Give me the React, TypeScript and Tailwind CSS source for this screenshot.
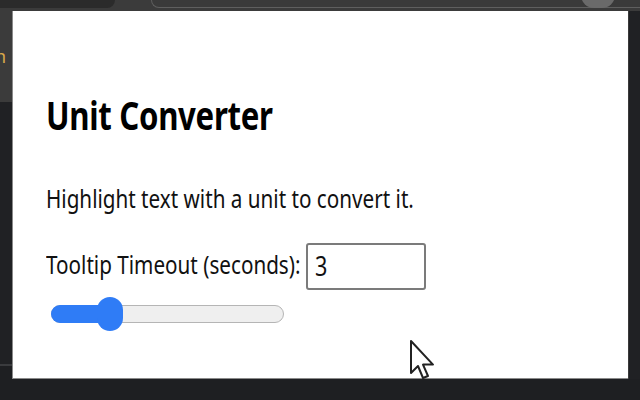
import React from "react";

export default function App() {
  return (
    <div className="relative w-[640px] h-[400px] overflow-hidden bg-[#202124]" style={{ fontFamily: '"Noto Sans", "Open Sans", sans-serif' }}>
      {/* top chrome strip */}
      <div className="flex h-[11px] bg-[#3b3b3b]">
        <div className="w-[115px] h-[8px] bg-[#2b2b2b] rounded-br-[8px]" />
        <div className="ml-[36px] flex-1 h-[8px] rounded-bl-[8px] border-l border-b border-[#5f5f5f] bg-[#3a3a3a]" />
        <div className="absolute left-[581px] top-[-18px] w-[34px] h-[26px] rounded-full bg-[#6a6a6a]" />
      </div>
      <div className="flex h-[368px]">
        {/* left side */}
        <div className="w-[12px] flex flex-col">
          <div className="h-[91px] bg-[#3b3b3b] relative">
            <span className="absolute left-[-5px] top-[36px] text-[18px] leading-none text-[#d9a84a]">n</span>
          </div>
          <div className="h-[262px] bg-[#202124]" />
          <div className="h-[2px] bg-[#3a3b3e]" />
          <div className="flex-1 bg-[#1e1f22]" />
        </div>
        {/* popup */}
        <div className="w-[616px] bg-white border-l border-b border-[#8a8a8a] pl-[33px] pt-[80px]">
          <h1 className="h-[48px] text-[39px] font-bold leading-[48px] text-black tracking-[-0.4px] whitespace-nowrap">
            <span className="inline-block origin-left scale-x-[0.8]">Unit Converter</span>
          </h1>
          <p className="mt-[43px] h-[32px] text-[26px] leading-[32px] text-[#111] whitespace-nowrap">
            <span className="inline-block origin-left scale-x-[0.795]">Highlight text with a unit to convert it.</span>
          </p>
          <div className="mt-[29px] flex items-start">
            <div className="w-[260px] mt-[5px] h-[32px] text-[26px] leading-[32px] text-[#111] whitespace-nowrap">
              <span className="inline-block origin-left scale-x-[0.795]">Tooltip Timeout (seconds):</span>
            </div>
            <div className="w-[120px] h-[47px] border-2 border-[#7b7b7b] rounded-[3px] pl-[7px] pt-[3px] text-[27px] leading-[36px] text-[#111]">
              <span className="inline-block origin-left scale-x-[0.8]">3</span>
            </div>
          </div>
          <div className="mt-[15px] ml-[5px] relative w-[233px] h-[18px]">
            <div className="absolute inset-0 rounded-full bg-[#efefef] border border-[#b5b5b5]" />
            <div className="absolute left-0 top-0 h-[18px] w-[60px] rounded-full bg-[#2f7cf6]" />
            <div className="absolute left-[46px] top-[-8px] w-[26px] h-[34px] rounded-full bg-[#2f7cf6]" />
          </div>
        </div>
        <div className="flex-1 bg-[#202124] border-l border-[#3a3a3a]" />
      </div>
      <div className="h-[21px] bg-[#1e1f22]" />
      {/* mouse cursor */}
      <svg className="absolute left-[409px] top-[339px]" width="26" height="44" viewBox="0 0 13 22">
        <path d="M1 1 L1 17 L4.5 13.5 L7 19.5 L9.5 18.5 L7 12.8 L12 12.8 Z" fill="white" stroke="#222" strokeWidth="1" strokeLinejoin="round" />
      </svg>
    </div>
  );
}
